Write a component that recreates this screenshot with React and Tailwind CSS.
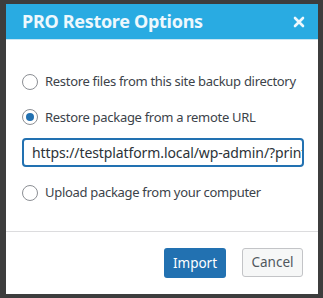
import React from 'react';

function Radio({ checked }) {
  return (
    <span className="flex h-4 w-4 shrink-0 items-center justify-center rounded-full border border-[#8c8f94] bg-white">
      {checked && <span className="h-2 w-2 rounded-full bg-[#2271b1]" />}
    </span>
  );
}

export default function App() {
  return (
    <div className="flex h-[298px] w-[323px] bg-[#3d3d3d] pl-[6px] pt-[4px] font-['Noto_Sans',sans-serif] text-[#3c434a]">
      <div className="flex h-[290px] w-[312px] flex-col bg-white">
        {/* header */}
        <div className="flex h-[36px] items-center justify-between border-b border-[#c9e6f3] bg-[#29abe2] pl-[16px] pr-[12px]">
          <span className="text-[18px] font-bold tracking-[-0.3px] text-[#eef8fd]">PRO Restore Options</span>
          <svg width="12" height="12" viewBox="0 0 12 12" className="mr-[1px]">
            <path d="M2 2 L10 10 M10 2 L2 10" stroke="#eef8fd" strokeWidth="2.6" strokeLinecap="round" />
          </svg>
        </div>

        {/* body */}
        <div className="flex flex-1 flex-col px-[16px] pt-[32px] text-[13px] tracking-[-0.3px]">
          <label className="flex items-center gap-[7px] whitespace-nowrap">
            <Radio />
            <span>Restore files from this site backup directory</span>
          </label>
          <label className="mt-[16px] flex items-center gap-[7px] whitespace-nowrap">
            <Radio checked />
            <span>Restore package from a remote URL</span>
          </label>
          <div className="mt-[11px] flex h-[29px] w-[282px] items-center overflow-hidden rounded-[4px] border-2 border-[#2271b1] pl-[8px] pr-[6px]">
            <span className="whitespace-nowrap text-[14px] tracking-[-0.1px] text-[#2c3338]">https://testplatform.local/wp-admin/?print</span>
          </div>
          <label className="mt-[16px] flex items-center gap-[7px] whitespace-nowrap">
            <Radio />
            <span>Upload package from your computer</span>
          </label>
        </div>

        {/* footer */}
        <div className="flex h-[63px] items-start justify-end gap-[16px] border-t border-[#dcdcde] pr-[15px] pt-[16px]">
          <button className="h-[30px] w-[62px] rounded-[3px] bg-[#2271b1] text-[13.5px] text-white">Import</button>
          <button className="h-[29px] w-[61px] rounded-[3px] border border-[#c3c4c7] bg-[#f6f7f7] text-[13.5px] text-[#50575e]">Cancel</button>
        </div>
      </div>
    </div>
  );
}
